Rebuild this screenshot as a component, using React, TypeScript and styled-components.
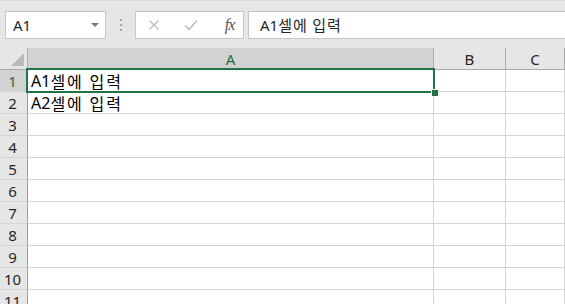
import React from "react"
import styled, { createGlobalStyle } from "styled-components"

const GlobalStyle = createGlobalStyle`
    html, body {
        margin: 0;
        padding: 0;
        background: #ffffff;
        overflow: hidden;
    }
    body {
        font-family: "Noto Sans", "Noto Sans CJK KR", sans-serif;
    }
`

const FONT = `"Noto Sans", "Noto Sans CJK KR", sans-serif`

const Toolbar = styled.div`
    display: flex;
    align-items: center;
    height: 48px;
    border-top: 1px solid #d8d8d8;
    background: #e6e6e6;
    padding-left: 5px;
    box-sizing: border-box;
`

const NameBox = styled.div`
    display: flex;
    align-items: center;
    justify-content: space-between;
    width: 101px;
    height: 28px;
    box-sizing: border-box;
    background: #ffffff;
    border: 1px solid #c6c6c6;
    padding: 0 6px 0 7px;
    font-family: ${FONT};
    font-size: 15px;
    color: #262626;
`

const Caret = styled.span`
    width: 0;
    height: 0;
    border-left: 4px solid transparent;
    border-right: 4px solid transparent;
    border-top: 4px solid #777777;
    margin-top: 1px;
`

const Grip = styled.div`
    display: flex;
    flex-direction: column;
    gap: 3px;
    margin: 0 13px 0 14px;
    span {
        width: 2px;
        height: 2px;
        background: #a6a6a6;
    }
`

const FxBox = styled.div`
    display: flex;
    align-items: center;
    width: 109px;
    height: 28px;
    box-sizing: border-box;
    background: #ffffff;
    border: 1px solid #c6c6c6;
    margin-right: 4px;
`

const FxButton = styled.div<{ $w: number }>`
    display: flex;
    align-items: center;
    justify-content: center;
    width: ${p => p.$w}px;
    height: 100%;
`

const FxLabel = styled.span`
    font-family: "Liberation Serif", serif;
    font-style: italic;
    font-size: 16px;
    color: #555555;
    letter-spacing: -1px;
    padding-left: 6px;
`

const FormulaInput = styled.div`
    flex: 1;
    display: flex;
    align-items: center;
    height: 28px;
    box-sizing: border-box;
    background: #ffffff;
    border: 1px solid #c6c6c6;
    border-right: none;
    padding-left: 11px;
    font-family: ${FONT};
    font-size: 15px;
    color: #262626;
    white-space: pre;
`

const Hangul = styled.span<{ $size: number; $spacing: number }>`
    font-family: "Noto Sans CJK KR", sans-serif;
    font-size: ${p => p.$size}px;
    letter-spacing: ${p => p.$spacing}px;
    line-height: 1;
`

const Sheet = styled.div`
    display: grid;
    grid-template-columns: 28px 406px 72px 1fr;
    grid-auto-rows: 22px;
    grid-template-rows: 22px;
    background: #ffffff;
`

const Corner = styled.div`
    position: relative;
    background: #e6e6e6;
    border-right: 1px solid #ababab;
    border-bottom: 1px solid #ababab;
    box-sizing: border-box;
    &::after {
        content: "";
        position: absolute;
        right: 3px;
        bottom: 3px;
        width: 0;
        height: 0;
        border-left: 13px solid transparent;
        border-bottom: 13px solid #b9b9b9;
    }
`

const ColHead = styled.div<{ $active?: boolean }>`
    display: flex;
    align-items: center;
    justify-content: center;
    box-sizing: border-box;
    background: ${p => (p.$active ? "#d2d2d2" : "#e6e6e6")};
    border-right: 1px solid #ababab;
    border-bottom: 1px solid #ababab;
    font-family: ${FONT};
    font-size: 15px;
    color: ${p => (p.$active ? "#1d6a40" : "#262626")};
    padding-top: 1px;
`

const RowHead = styled.div<{ $active?: boolean }>`
    display: flex;
    align-items: center;
    justify-content: center;
    box-sizing: border-box;
    background: ${p => (p.$active ? "#d2d2d2" : "#e6e6e6")};
    border-right: 1px solid #9e9e9e;
    border-bottom: 1px solid #d4d4d4;
    font-family: ${FONT};
    font-size: 15px;
    color: ${p => (p.$active ? "#1d6a40" : "#262626")};
    padding-right: 2px;
`

const Cell = styled.div<{ $selected?: boolean }>`
    position: relative;
    display: flex;
    align-items: center;
    box-sizing: border-box;
    border-right: 1px solid #d4d4d4;
    border-bottom: 1px solid #d4d4d4;
    padding-left: 3px;
    font-family: ${FONT};
    font-size: 16px;
    line-height: 1;
    color: #000000;
    white-space: pre;
    ${p =>
        p.$selected &&
        `
        &::before {
            content: "";
            position: absolute;
            left: -2px;
            top: -2px;
            right: -2px;
            bottom: -2px;
            border: 2px solid #217346;
            z-index: 1;
        }
        &::after {
            content: "";
            position: absolute;
            right: -5px;
            bottom: -5px;
            width: 6px;
            height: 6px;
            background: #217346;
            border: 1px solid #ffffff;
            border-bottom: none;
            border-right: none;
            z-index: 2;
        }
    `}
`

const cellText: Record<number, [string, string]> = {
    1: ["A1", "셀에 입력"],
    2: ["A2", "셀에 입력"],
}

export default function App() {
    const rows = Array.from({ length: 11 }, (_, i) => i + 1)
    return (
        <>
            <GlobalStyle />
            <Toolbar>
                <NameBox>
                    A1
                    <Caret />
                </NameBox>
                <Grip>
                    <span />
                    <span />
                    <span />
                </Grip>
                <FxBox>
                    <FxButton $w={36}>
                        <svg width="12" height="12" viewBox="0 0 12 12">
                            <path d="M1.5 1.5 L10.5 10.5 M10.5 1.5 L1.5 10.5" stroke="#bdbdbd" strokeWidth="1.4" fill="none" />
                        </svg>
                    </FxButton>
                    <FxButton $w={38}>
                        <svg width="14" height="12" viewBox="0 0 14 12">
                            <path d="M1 6.5 L5 10.5 L13 1.5" stroke="#bdbdbd" strokeWidth="1.6" fill="none" />
                        </svg>
                    </FxButton>
                    <FxButton $w={33}>
                        <FxLabel>fx</FxLabel>
                    </FxButton>
                </FxBox>
                <FormulaInput>
                    A1<Hangul $size={15} $spacing={1}>셀에 입력</Hangul>
                </FormulaInput>
            </Toolbar>
            <Sheet>
                <Corner />
                <ColHead $active>A</ColHead>
                <ColHead>B</ColHead>
                <ColHead>C</ColHead>
                {rows.map(r => (
                    <React.Fragment key={r}>
                        <RowHead $active={r === 1}>{r}</RowHead>
                        <Cell $selected={r === 1}>
                            {cellText[r] && (
                                <>
                                    {cellText[r][0]}
                                    <Hangul $size={16} $spacing={2}>{cellText[r][1]}</Hangul>
                                </>
                            )}
                        </Cell>
                        <Cell />
                        <Cell />
                    </React.Fragment>
                ))}
            </Sheet>
        </>
    )
}
